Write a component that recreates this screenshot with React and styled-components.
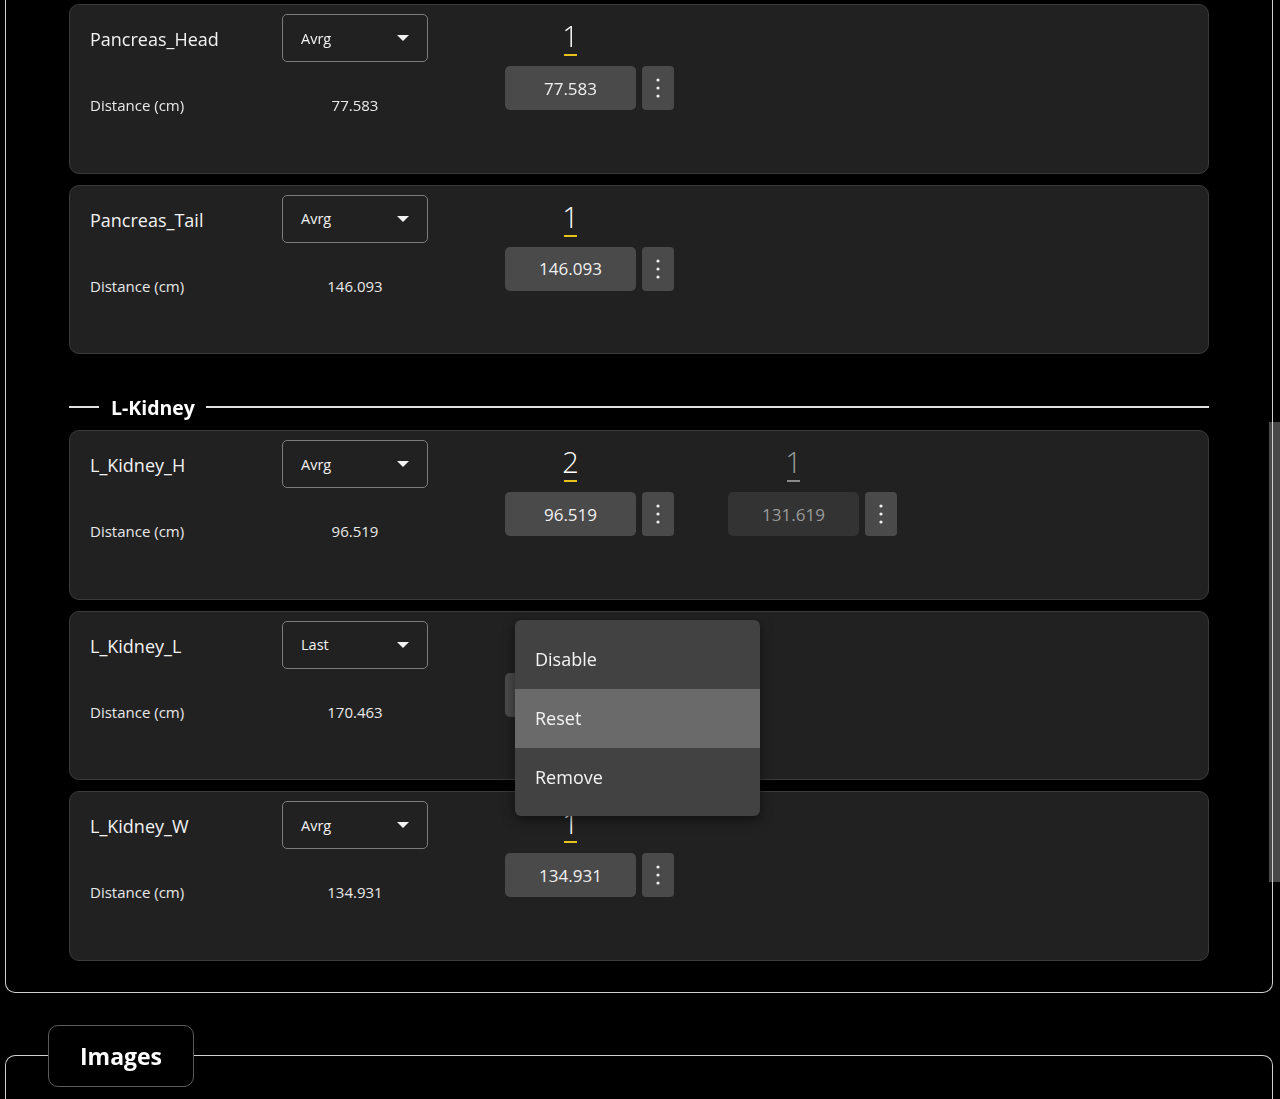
import React from "react";
import styled, { createGlobalStyle } from "styled-components";

const Global = createGlobalStyle`
  html {
    background: #000;
  }
  html, body {
    margin: 0;
    padding: 0;
    color: #fff;
    font-family: "Open Sans", "Noto Sans", sans-serif;
    overflow: hidden;
    height: 1099px;
  }
`;

const Page = styled.div`
  width: 1280px;
  height: 1099px;
  box-sizing: border-box;
  padding: 0 7px 0 5px;
  display: flex;
  flex-direction: column;
`;

const Panel = styled.div`
  box-sizing: border-box;
  border: 1.5px solid #cfcfcf;
  border-top: none;
  border-radius: 0 0 10px 10px;
  padding: 4px 63px 31px 63px;
  display: flex;
  flex-direction: column;
  gap: 11px;
`;

const SectionHeader = styled.div`
  display: flex;
  align-items: center;
  height: 24px;
  margin-top: 30px;
  gap: 11px;
  &::before {
    content: "";
    width: 30px;
    height: 1.5px;
    background: #e0e0e0;
  }
  &::after {
    content: "";
    flex: 1;
    height: 1.5px;
    background: #e0e0e0;
  }
`;

const SectionTitle = styled.span`
  font-size: 19.5px;
  font-weight: 700;
  color: #fff;
  padding-left: 1px;
`;

const Card = styled.div`
  position: relative;
  box-sizing: border-box;
  height: 169.5px;
  background: #212121;
  border: 1px solid #3b3b3b;
  border-radius: 10px;
  padding: 9px 20px 0 20px;
  display: flex;
  align-items: flex-start;
`;

const Info = styled.div`
  display: grid;
  grid-template-columns: 192px 146px;
  grid-template-rows: 48px 20px;
  row-gap: 33px;
  align-items: center;
`;

const Name = styled.div`
  font-size: 18px;
  color: #f2f2f2;
  padding-top: 2px;
`;

const Select = styled.div`
  box-sizing: border-box;
  height: 48px;
  border: 1px solid #7c7c7c;
  border-radius: 5px;
  display: flex;
  align-items: center;
  justify-content: space-between;
  padding: 0 18px 0 18px;
  font-size: 14.5px;
  color: #f2f2f2;
`;

const Caret = styled.span`
  width: 0;
  height: 0;
  border-left: 6px solid transparent;
  border-right: 6px solid transparent;
  border-top: 6px solid #f2f2f2;
`;

const Label = styled.div`
  font-size: 15px;
  color: #e8e8e8;
`;

const Value = styled.div`
  font-size: 15px;
  color: #e8e8e8;
  justify-self: center;
`;

const Measures = styled.div`
  display: flex;
  gap: 54px;
  margin-left: 77px;
`;

const Measure = styled.div`
  display: grid;
  grid-template-columns: 131px 32px;
  column-gap: 6px;
  grid-template-rows: 52px 44px;
`;

const Count = styled.div`
  display: flex;
  flex-direction: column;
  align-items: center;
  justify-content: flex-end;
  padding-bottom: 10px;
  color: ${(p) => (p.$active ? "#ffffff" : "#9a9a9a")};
  font-size: 29px;
  font-weight: 300;
  line-height: 32px;
  &::after {
    content: "";
    width: 13px;
    height: 2px;
    margin-top: 2px;
    background: ${(p) => (p.$active ? "#e8c21a" : "#8a8a8a")};
  }
`;

const Spacer = styled.div``;

const Box = styled.div`
  display: flex;
  align-items: center;
  justify-content: center;
  border-radius: 5px;
  background: ${(p) => (p.$active ? "#4a4a4a" : "#333333")};
  color: ${(p) => (p.$active ? "#f0f0f0" : "#9a9a9a")};
  font-size: 17px;
`;

const Kebab = styled.div`
  display: flex;
  align-items: center;
  justify-content: center;
  border-radius: 4px;
  background: #4a4a4a;
`;

const Menu = styled.div`
  position: absolute;
  left: 445px;
  top: 8px;
  width: 245px;
  box-sizing: border-box;
  padding: 10px 0 9px;
  background: #424242;
  border-radius: 6px;
  box-shadow: 0 4px 12px rgba(0, 0, 0, 0.5);
  z-index: 10;
`;

const MenuItem = styled.div`
  height: 59px;
  display: flex;
  align-items: center;
  padding-left: 20px;
  font-size: 18px;
  color: #f4f4f4;
  background: ${(p) => (p.$hover ? "#6a6a6a" : "transparent")};
`;

const ImagesSet = styled.fieldset`
  margin: 32px 0 0 0;
  padding: 0;
  border: 1.5px solid #cfcfcf;
  border-bottom: none;
  border-radius: 10px 10px 0 0;
  min-height: 80px;
`;

const ImagesTab = styled.legend`
  margin-left: 42px;
  box-sizing: border-box;
  width: 146px;
  height: 62px;
  padding: 0;
  border: 1px solid #5a5a5a;
  border-radius: 10px;
  display: flex;
  align-items: center;
  justify-content: center;
  font-size: 23px;
  font-weight: 700;
  color: #fff;
`;

const Thumb = styled.div`
  position: fixed;
  right: 0;
  top: 422px;
  width: 11px;
  height: 460px;
  background: #484848;
  z-index: -1;
`;

const Dots = () => (
  <svg width="6" height="22" viewBox="0 0 6 22">
    <circle cx="3" cy="3" r="1.6" fill="#f0f0f0" />
    <circle cx="3" cy="11" r="1.6" fill="#f0f0f0" />
    <circle cx="3" cy="19" r="1.6" fill="#f0f0f0" />
  </svg>
);

const groups = [
  {
    title: null,
    items: [
      { name: "Pancreas_Head", mode: "Avrg", dist: "77.583", cols: [{ n: 1, v: "77.583", a: true }] },
      { name: "Pancreas_Tail", mode: "Avrg", dist: "146.093", cols: [{ n: 1, v: "146.093", a: true }] },
    ],
  },
  {
    title: "L-Kidney",
    items: [
      {
        name: "L_Kidney_H",
        mode: "Avrg",
        dist: "96.519",
        cols: [
          { n: 2, v: "96.519", a: true },
          { n: 1, v: "131.619", a: false },
        ],
      },
      { name: "L_Kidney_L", mode: "Last", dist: "170.463", cols: [{ n: 1, v: "170.463", a: true }], menu: true },
      { name: "L_Kidney_W", mode: "Avrg", dist: "134.931", cols: [{ n: 1, v: "134.931", a: true }] },
    ],
  },
];

export default function App() {
  return (
    <>
      <Global />
      <Thumb />
      <Page>
        <Panel>
          {groups.map((g, gi) => (
            <React.Fragment key={gi}>
              {g.title && (
                <SectionHeader>
                  <SectionTitle>{g.title}</SectionTitle>
                </SectionHeader>
              )}
              {g.items.map((it) => (
                <Card key={it.name}>
                  <Info>
                    <Name>{it.name}</Name>
                    <Select>
                      <span>{it.mode}</span>
                      <Caret />
                    </Select>
                    <Label>Distance (cm)</Label>
                    <Value>{it.dist}</Value>
                  </Info>
                  <Measures>
                    {it.cols.map((c, ci) => (
                      <Measure key={ci}>
                        <Count $active={c.a}>{c.n}</Count>
                        <Spacer />
                        <Box $active={c.a}>{c.v}</Box>
                        <Kebab>
                          <Dots />
                        </Kebab>
                      </Measure>
                    ))}
                  </Measures>
                  {it.menu && (
                    <Menu>
                      <MenuItem>Disable</MenuItem>
                      <MenuItem $hover>Reset</MenuItem>
                      <MenuItem>Remove</MenuItem>
                    </Menu>
                  )}
                </Card>
              ))}
            </React.Fragment>
          ))}
        </Panel>
        <ImagesSet>
          <ImagesTab>Images</ImagesTab>
        </ImagesSet>
      </Page>
    </>
  );
}
